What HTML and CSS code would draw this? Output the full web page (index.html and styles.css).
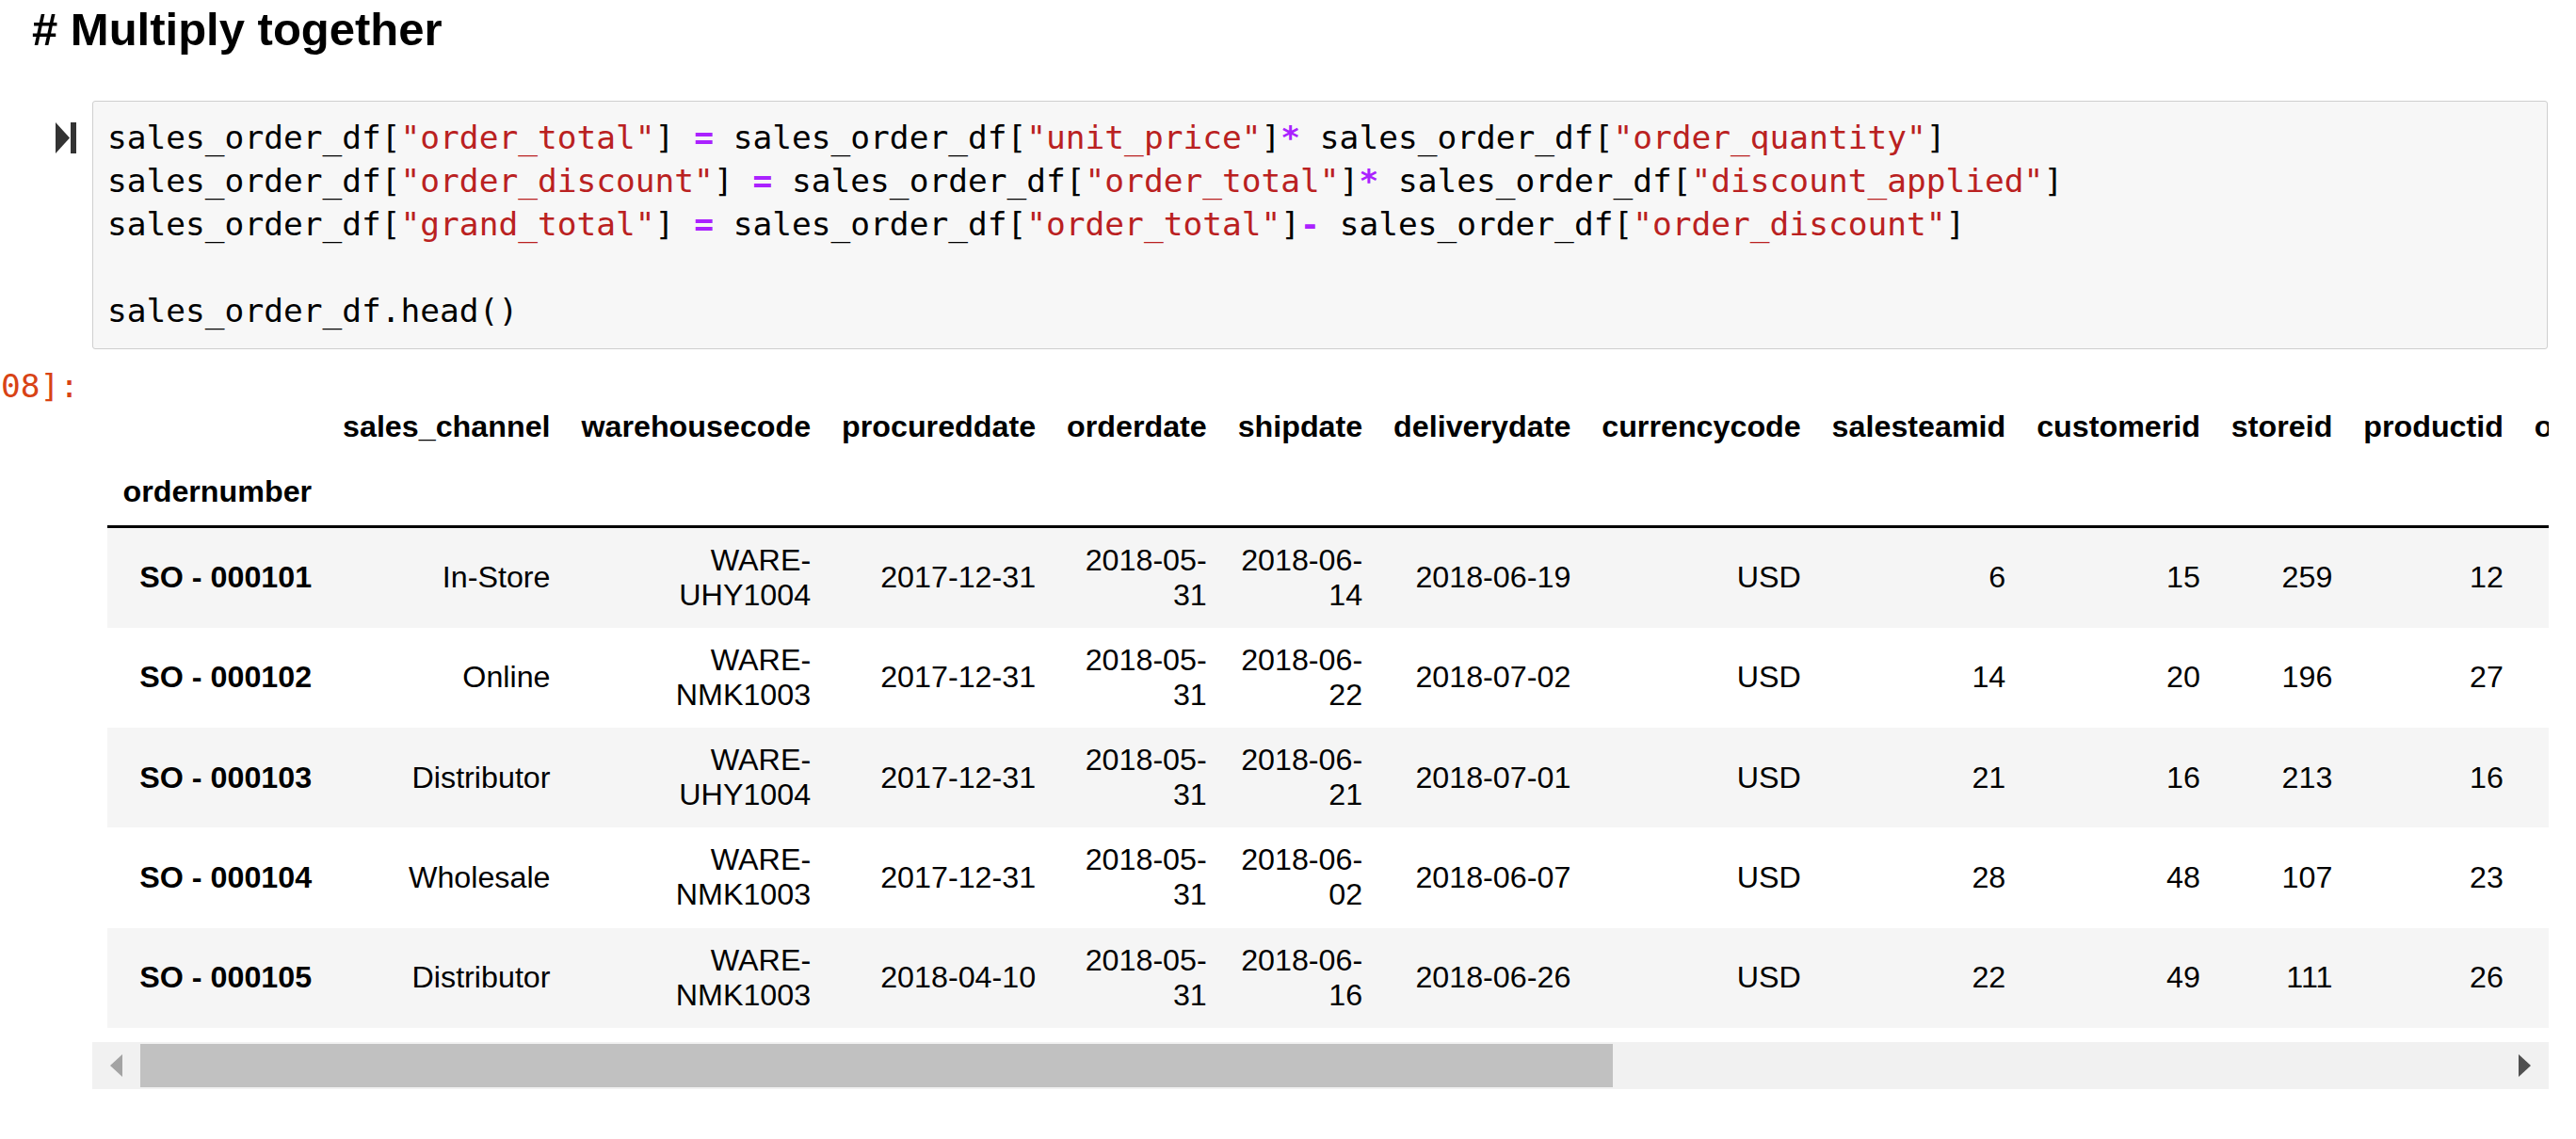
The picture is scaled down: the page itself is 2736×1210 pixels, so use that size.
FILE: index.html
```html
<!DOCTYPE html>
<html lang="en">
<head>
<meta charset="utf-8">
<title>Multiply together</title>
<link rel="stylesheet" href="styles.css">
</head>
<body>
<div class="notebook">
  <h1 class="md-heading"># Multiply together</h1>

  <div class="cell">
    <div class="in-prompt">
      <svg class="run-icon" viewBox="0 0 22 33" aria-hidden="true"><path d="M0 0 L15 16.5 L0 33 Z" fill="#333"/><rect x="16" y="0" width="6" height="33" fill="#333"/></svg>
    </div>
    <div class="input-area">
<pre class="code">sales_order_df[<span class="s">"order_total"</span>] <span class="o">=</span> sales_order_df[<span class="s">"unit_price"</span>]<span class="o">*</span> sales_order_df[<span class="s">"order_quantity"</span>]
sales_order_df[<span class="s">"order_discount"</span>] <span class="o">=</span> sales_order_df[<span class="s">"order_total"</span>]<span class="o">*</span> sales_order_df[<span class="s">"discount_applied"</span>]
sales_order_df[<span class="s">"grand_total"</span>] <span class="o">=</span> sales_order_df[<span class="s">"order_total"</span>]<span class="o">-</span> sales_order_df[<span class="s">"order_discount"</span>]

sales_order_df.head()</pre>
    </div>
  </div>

  <div class="output">
    <div class="out-prompt"><span>Out[108]:</span></div>
    <div class="output-subarea">
      <div class="scroll-view">
        <table class="df">
          <thead>
            <tr>
              <th></th>
              <th>sales_channel</th>
              <th>warehousecode</th>
              <th>procureddate</th>
              <th>orderdate</th>
              <th>shipdate</th>
              <th>deliverydate</th>
              <th>currencycode</th>
              <th>salesteamid</th>
              <th>customerid</th>
              <th>storeid</th>
              <th>productid</th>
              <th>order_quantity</th>
              <th>discount_applied</th>
              <th>unit_price</th>
              <th>unit_cost</th>
              <th>order_total</th>
              <th>order_discount</th>
              <th>grand_total</th>
            </tr>
            <tr>
              <th>ordernumber</th>
              <th></th><th></th><th></th><th></th><th></th><th></th><th></th><th></th><th></th><th></th><th></th><th></th><th></th><th></th><th></th><th></th><th></th><th></th>
            </tr>
          </thead>
          <tbody>
            <tr>
              <th>SO - 000101</th>
              <td>In-Store</td>
              <td>WARE-UHY1004</td>
              <td>2017-12-31</td>
              <td>2018-05-<wbr>31</td>
              <td>2018-06-<wbr>14</td>
              <td>2018-06-19</td>
              <td>USD</td>
              <td>6</td>
              <td>15</td>
              <td>259</td>
              <td>12</td>
              <td>5</td>
              <td>0.075</td>
              <td>1963.1</td>
              <td>1001.18</td>
              <td>9815.5</td>
              <td>736.1625</td>
              <td>9079.3375</td>
            </tr>
            <tr>
              <th>SO - 000102</th>
              <td>Online</td>
              <td>WARE-NMK1003</td>
              <td>2017-12-31</td>
              <td>2018-05-<wbr>31</td>
              <td>2018-06-<wbr>22</td>
              <td>2018-07-02</td>
              <td>USD</td>
              <td>14</td>
              <td>20</td>
              <td>196</td>
              <td>27</td>
              <td>3</td>
              <td>0.075</td>
              <td>3939.6</td>
              <td>3348.66</td>
              <td>11818.8</td>
              <td>886.41</td>
              <td>10932.39</td>
            </tr>
            <tr>
              <th>SO - 000103</th>
              <td>Distributor</td>
              <td>WARE-UHY1004</td>
              <td>2017-12-31</td>
              <td>2018-05-<wbr>31</td>
              <td>2018-06-<wbr>21</td>
              <td>2018-07-01</td>
              <td>USD</td>
              <td>21</td>
              <td>16</td>
              <td>213</td>
              <td>16</td>
              <td>1</td>
              <td>0.05</td>
              <td>1775.5</td>
              <td>781.22</td>
              <td>1775.5</td>
              <td>88.775</td>
              <td>1686.725</td>
            </tr>
            <tr>
              <th>SO - 000104</th>
              <td>Wholesale</td>
              <td>WARE-NMK1003</td>
              <td>2017-12-31</td>
              <td>2018-05-<wbr>31</td>
              <td>2018-06-<wbr>02</td>
              <td>2018-06-07</td>
              <td>USD</td>
              <td>28</td>
              <td>48</td>
              <td>107</td>
              <td>23</td>
              <td>8</td>
              <td>0.075</td>
              <td>2324.9</td>
              <td>1464.69</td>
              <td>18599.2</td>
              <td>1394.94</td>
              <td>17204.26</td>
            </tr>
            <tr>
              <th>SO - 000105</th>
              <td>Distributor</td>
              <td>WARE-NMK1003</td>
              <td>2018-04-10</td>
              <td>2018-05-<wbr>31</td>
              <td>2018-06-<wbr>16</td>
              <td>2018-06-26</td>
              <td>USD</td>
              <td>22</td>
              <td>49</td>
              <td>111</td>
              <td>26</td>
              <td>8</td>
              <td>0.1</td>
              <td>1822.4</td>
              <td>1476.14</td>
              <td>14579.2</td>
              <td>1457.92</td>
              <td>13121.28</td>
            </tr>
          </tbody>
        </table>
      </div>
      <div class="scrollbar">
        <div class="sb-btn"><span class="arrow-left"></span></div>
        <div class="sb-track"><div class="sb-thumb"></div></div>
        <div class="sb-btn"><span class="arrow-right"></span></div>
      </div>
    </div>
  </div>
</div>
</body>
</html>
```

FILE: styles.css
```css
html, body {
  margin: 0;
  padding: 0;
  background: #ffffff;
}

body {
  width: 2736px;
  height: 1210px;
  overflow: hidden;
  font-family: "Liberation Sans", Arial, sans-serif;
  color: #000000;
}

.md-heading {
  margin: 0;
  padding: 3px 0 0 34px;
  font-size: 49px;
  line-height: 56px;
  font-weight: bold;
}

.cell {
  display: flex;
  margin-top: 48px;
}

.in-prompt {
  width: 98px;
  flex-shrink: 0;
  box-sizing: border-box;
  display: flex;
  justify-content: flex-end;
  align-items: flex-start;
  padding: 23px 17px 0 0;
}

.run-icon {
  display: block;
  width: 22px;
  height: 33px;
}

.input-area {
  flex: 1;
  min-width: 0;
  margin-right: 30px;
  background: #f7f7f7;
  border: 1px solid #cfcfcf;
  border-radius: 3px;
  padding: 15px 15px 17px 15px;
  overflow: hidden;
}

.code {
  margin: 0;
  font-family: "DejaVu Sans Mono", "Liberation Mono", monospace;
  font-size: 34.5px;
  line-height: 46px;
  white-space: pre;
  color: #000000;
}

.s {
  color: #ba2121;
}

.o {
  color: #aa22ff;
  font-weight: bold;
}

.output {
  display: flex;
  margin-top: 16px;
}

.out-prompt {
  width: 98px;
  flex-shrink: 0;
  box-sizing: border-box;
  display: flex;
  justify-content: flex-end;
  padding-right: 14px;
  overflow: hidden;
  font-family: "DejaVu Sans Mono", "Liberation Mono", monospace;
  font-size: 34.5px;
  line-height: 46px;
  color: #d84315;
}

.out-prompt span {
  white-space: nowrap;
  flex-shrink: 0;
}

.output-subarea {
  flex: 1;
  min-width: 0;
  margin-right: 29px;
}

.scroll-view {
  overflow: hidden;
  padding: 32px 16px 15px 16px;
}

.df {
  border-collapse: separate;
  border-spacing: 0;
  font-size: 32.25px;
  color: #000000;
}

.df th,
.df td {
  padding: 0.5em 16.45px;
  text-align: right;
  vertical-align: middle;
}

.df th {
  font-weight: bold;
}

.df thead tr:last-child th {
  border-bottom: 3px solid #000000;
}

.df tbody tr:nth-child(odd) {
  background: #f5f5f5;
}

.scrollbar {
  display: flex;
  height: 50px;
  background: #f1f1f1;
}

.sb-btn {
  width: 51px;
  flex-shrink: 0;
  display: flex;
  align-items: center;
  justify-content: center;
}

.sb-track {
  flex: 1;
  padding: 2px 0;
}

.sb-thumb {
  width: 62.4%;
  height: 100%;
  background: #c1c1c1;
}

.arrow-left {
  width: 0;
  height: 0;
  border-top: 12.5px solid transparent;
  border-bottom: 12.5px solid transparent;
  border-right: 13px solid #a3a3a3;
}

.arrow-right {
  width: 0;
  height: 0;
  border-top: 12.5px solid transparent;
  border-bottom: 12.5px solid transparent;
  border-left: 13px solid #505050;
}
```
